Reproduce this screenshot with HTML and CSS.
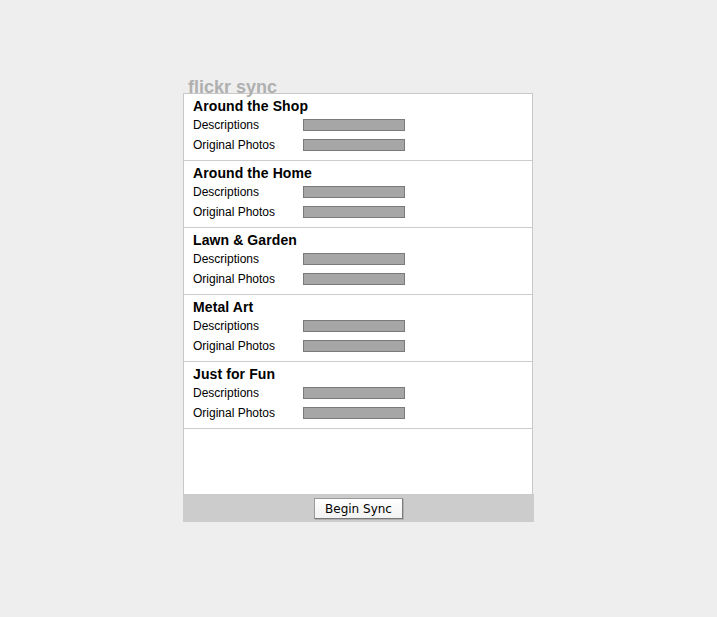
FILE: index.html
```html
<!DOCTYPE html>
<html>
<head>
<meta charset="utf-8">
<link rel="stylesheet" href="styles.css">
</head>
<body>
<div class="app">
  <div class="title">flickr sync</div>
  <div class="panel">
    <div class="sets">
      <div class="set">
        <div class="set-name">Around the Shop</div>
        <div class="row"><span class="label">Descriptions</span><span class="bar"></span></div>
        <div class="row"><span class="label">Original Photos</span><span class="bar"></span></div>
      </div>
      <div class="set">
        <div class="set-name">Around the Home</div>
        <div class="row"><span class="label">Descriptions</span><span class="bar"></span></div>
        <div class="row"><span class="label">Original Photos</span><span class="bar"></span></div>
      </div>
      <div class="set">
        <div class="set-name">Lawn &amp; Garden</div>
        <div class="row"><span class="label">Descriptions</span><span class="bar"></span></div>
        <div class="row"><span class="label">Original Photos</span><span class="bar"></span></div>
      </div>
      <div class="set">
        <div class="set-name">Metal Art</div>
        <div class="row"><span class="label">Descriptions</span><span class="bar"></span></div>
        <div class="row"><span class="label">Original Photos</span><span class="bar"></span></div>
      </div>
      <div class="set">
        <div class="set-name">Just for Fun</div>
        <div class="row"><span class="label">Descriptions</span><span class="bar"></span></div>
        <div class="row"><span class="label">Original Photos</span><span class="bar"></span></div>
      </div>
    </div>
    <div class="footer">
      <button class="sync-btn">Begin Sync</button>
    </div>
  </div>
</div>
</body>
</html>
```

FILE: styles.css
```css
html, body {
  margin: 0;
  padding: 0;
  background: #eeeeee;
  font-family: "Liberation Sans", Arial, sans-serif;
}

.app {
  width: 351px;
  margin: 0 auto;
  padding-top: 77px;
}

.title {
  font-size: 18px;
  font-weight: bold;
  color: #b0b0b0;
  line-height: 20px;
  height: 16px;
  padding-left: 5px;
}

.panel {
  background: #ffffff;
  border: 1px solid #c8c8c8;
  border-bottom: none;
  margin-right: 1px;
}

.sets {
  height: 400px;
}

.set {
  border-bottom: 1px solid #cccccc;
  padding: 4px 9px 0;
  height: 62px;
}

.set-name {
  font-size: 14px;
  font-weight: bold;
  line-height: 16px;
  color: #000;
  height: 17px;
  letter-spacing: 0.1px;
}

.row {
  display: flex;
  align-items: center;
  height: 20px;
  font-size: 12px;
  color: #000;
}

.label {
  width: 110px;
  flex: none;
}

.bar {
  width: 100px;
  height: 10px;
  background: #a6a6a6;
  border: 1px solid #7a7a7a;
}

.footer {
  background: #cccccc;
  height: 28px;
  margin: 0 -2px 0 -1px;
  display: flex;
  justify-content: center;
  align-items: center;
}

.sync-btn {
  font-family: "DejaVu Sans", sans-serif;
  font-size: 12px;
  color: #000;
  background: linear-gradient(#ffffff, #f2f2f2);
  border: 1px solid #9a9a9a;
  border-right-color: #7a7a7a;
  border-bottom-color: #7a7a7a;
  height: 21px;
  width: 89px;
  padding: 0;
  margin-top: 1px;
  box-shadow: 1px 1px 0 #b0b0b0;
}
```
